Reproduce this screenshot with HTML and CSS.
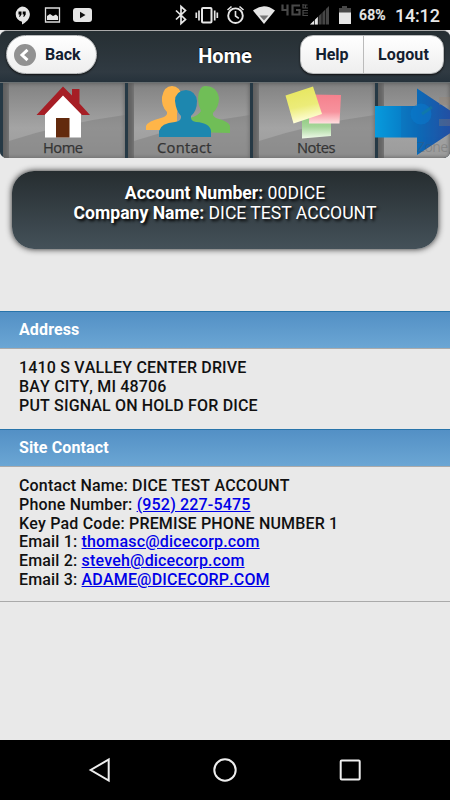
FILE: index.html
```html
<!DOCTYPE html>
<html lang="en">
<head>
<meta charset="utf-8">
<title>Home</title>
<link rel="stylesheet" href="styles.css">
</head>
<body>
<div class="status">
  <svg class="status-left" width="100" height="30" viewBox="0 0 100 30">
    <path d="M22 6.500a7.800 7.800 0 0 0 0 15.300V24.500c4-2 7.900-5.500 7.900-10.500A7.800 7.800 0 0 0 22 6.500z" fill="#e6e6e6"/>
    <path d="M18.500 11.500h3v3l-1.500 2.300h-1l.8-2.300h-1.300zM22.700 11.500h3v3l-1.500 2.300h-1l.8-2.300h-1.300z" fill="#000"/>
    <path d="M45.500 8h14v14h-14z" fill="none" stroke="#ddd" stroke-width="1.300"/>
    <path d="M47 20v-4l3-2 3 2 3-1.500 2 2V20z" fill="#e6e6e6"/>
    <rect x="73" y="8" width="19" height="14" rx="3" fill="#e6e6e6"/>
    <path d="M80 11.700v6.500l5.500-3.200z" fill="#111"/>
  </svg>
  <svg class="status-right" width="180" height="30" viewBox="172 0 180 30">
    <path d="M176 10.500l9.500 9-4.500 4V6.500l4.500 4-9.500 9" fill="none" stroke="#e6e6e6" stroke-width="1.700"/>
    <rect x="202" y="8" width="9.500" height="14.500" rx="1" fill="none" stroke="#e6e6e6" stroke-width="2"/>
    <path d="M199 10.500v10M196.300 12.500v5.500M214.700 10.500v10M217.300 12.500v5.500" stroke="#e6e6e6" stroke-width="1.700"/>
    <circle cx="235.500" cy="15.700" r="7.300" fill="none" stroke="#e6e6e6" stroke-width="1.900"/>
    <path d="M235.500 11v5l3.300 2.300M227.500 10l4-3.500M243.500 10l-4-3.500" fill="none" stroke="#e6e6e6" stroke-width="1.600"/>
    <path d="M253 10.500q11-8.500 22 0L264 24z" fill="#e6e6e6"/>
    <path d="M259.500 15.500h9l-4.500 5z" fill="#777"/>
    <path d="M282.500 4.500v5.500h6M287.500 4.500v11M300 5.500h-7.500v9h7v-4.500h-3.500" fill="none" stroke="#484848" stroke-width="2.200"/>
    <path d="M303 4v4h5M302.500 5h5M305.500 5v3M308 10.500h-5v5h5M303 13h5" fill="none" stroke="#484848" stroke-width="1.200"/>
    <path d="M310 24.500L329 6v18.500z" fill="#454545"/>
    <path d="M310 24.500l8-7.800v7.800z" fill="#e6e6e6"/>
    <path d="M314.500 19v6M318.300 16v9M322 11v14M325.500 8v17" stroke="#000" stroke-width=".7"/>
    <path d="M342 6h5v2h4v5h-12V8h3z" fill="#484848"/>
    <path d="M339 12.500h12V24h-12z" fill="#e6e6e6"/>
  </svg>
  <span class="battery">68%</span>
  <span class="clock">14:12</span>
</div>
<div class="top">
  <header class="header">
    <a class="btn back"><svg width="22" height="22" viewBox="0 0 22 22"><circle cx="11" cy="11" r="11" fill="#919191"/><path d="M13.500 5.800L8 11l5.500 5.200" fill="none" stroke="#fff" stroke-width="3"/></svg>Back</a>
    <h1>Home</h1>
    <div class="btn group"><a class="help">Help</a><a class="logout">Logout</a></div>
  </header>
  <nav class="tabs">
    <a class="tab"><svg width="122" height="75" viewBox="3 83 122 75">
      <path d="M9 141Q65 123 125 115v43H9z" class="shade"/>
      <path d="M45 110l18-18 18 18v27.500H45z" fill="#fff"/>
      <path d="M56 118h13.500v19.500H56z" fill="#632a0d"/>
      <path d="M36.500 115L63 86.500l9 9V89h7.500v14.500L90 115h-8L63 95.500 44.500 115z" fill="#a61e25"/>
    </svg><span class="home-label">Home</span></a>
    <a class="tab"><svg width="122" height="75" viewBox="128 83 122 75">
      <path d="M134 141Q190 123 250 115v43H134z" class="shade"/>
      <path d="M146 130v-4q2-5 15-8 7-2 6-6-6-6-5-15 2-11 10-11t10 11q0 9-5 15v18z" fill="#ffb548"/>
      <path d="M190 132v-14q8-2 11-7-3-6-3-13 1-12 7-12 12 0 14 12 0 9-6 15-1 4 6 6 10 3 11 7v7z" fill="#70be57"/>
      <path d="M159 137v-6q2-8 16-9 7-1 6-6-5-5-6-15 0-10 11-11 10 1 11 11 0 10-6 15-1 5 5 6 14 1 15 9v6z" fill="#1d87af"/>
    </svg><span class="contact-label">Contact</span></a>
    <a class="tab"><svg width="122" height="75" viewBox="253 83 122 75">
      <defs>
        <linearGradient id="green" x1="0" y1="0" x2="0" y2="1"><stop stop-color="#8bc77b"/><stop offset=".5" stop-color="#a6d69a"/><stop offset="1" stop-color="#effae9"/></linearGradient>
        <linearGradient id="pink" x1="0" y1="0" x2="0" y2="1"><stop stop-color="#f5818d"/><stop offset=".6" stop-color="#f7929d"/><stop offset="1" stop-color="#ffdfe0"/></linearGradient>
        <linearGradient id="yellow" x1="0" y1="0" x2=".2" y2="1"><stop stop-color="#e6e55a"/><stop offset=".6" stop-color="#ecec79"/><stop offset="1" stop-color="#fffed8"/></linearGradient>
      </defs>
      <path d="M259 141Q315 123 375 115v43H259z" class="shade"/>
      <path d="M302 115l29 3v18l-29 2.500z" fill="url(#green)"/>
      <path d="M310 94.500l31 .5-1.500 28.500H309z" fill="url(#pink)"/>
      <path d="M285.500 95.500L313 86.500l9 27.500-28.500 9.500z" fill="url(#yellow)"/>
    </svg><span class="notes-label">Notes</span></a>
    <a class="tab last"></a>
    <svg class="arrow" width="75" height="75" viewBox="375 83 75 75">
      <defs><linearGradient id="blue" gradientUnits="userSpaceOnUse" x1="375" y1="0" x2="452" y2="0"><stop stop-color="#079bdd"/><stop offset=".55" stop-color="#076fbd"/><stop offset="1" stop-color="#244da4"/></linearGradient></defs>
      <path d="M375 106h42V88.500l50 33.500-50 33v-17.500h-42z" fill="url(#blue)"/>
      <path d="M401 106h16V88.500l50 33.500-50 33v-17.500h-16z" fill="#23559c" opacity=".17"/>
      <circle cx="421" cy="114" r="10.500" fill="#087bd0" opacity=".5"/>
      <path d="M422 114l10-7" stroke="#148394" stroke-width="3" opacity=".45"/>
      <path d="M439 97h11v8h-11zM439 119h11v7h-11z" fill="#99806a" opacity=".3"/>
    </svg>
    <span class="zone-label">Zone</span>
  </nav>
</div>
<main>
  <section class="account"><div><b>Account Number:</b> 00DICE</div><div><b>Company Name:</b> DICE TEST ACCOUNT</div></section>
  <h2>Address</h2>
  <section class="details address">
    <div>1410 S VALLEY CENTER DRIVE</div>
    <div>BAY CITY, MI 48706</div>
    <div>PUT SIGNAL ON HOLD FOR DICE</div>
  </section>
  <h2>Site Contact</h2>
  <section class="details contact">
    <div>Contact Name: DICE TEST ACCOUNT</div>
    <div>Phone Number: <a href="#">(952) 227-5475</a></div>
    <div>Key Pad Code: PREMISE PHONE NUMBER 1</div>
    <div>Email 1: <a href="#">thomasc@dicecorp.com</a></div>
    <div>Email 2: <a href="#">steveh@dicecorp.com</a></div>
    <div>Email 3: <a href="#">ADAME@DICECORP.COM</a></div>
  </section>
</main>
<footer class="softkeys">
  <svg width="24" height="26" viewBox="0 0 24 26"><path d="M21.700 2.500v21L3.700 13z"/></svg>
  <svg width="26" height="26" viewBox="0 0 26 26"><circle cx="13" cy="13" r="10.700"/></svg>
  <svg width="24" height="26" viewBox="0 0 24 26"><rect x="1.700" y="3.500" width="19" height="19" rx="1"/></svg>
</footer>
</body>
</html>
```
FILE: styles.css
```css
* { box-sizing: border-box; }
body {
  margin: 0;
  width: 450px;
  height: 800px;
  display: flex;
  flex-direction: column;
  overflow: hidden;
  background: #e9e9e9;
  color: #111;
  font-family: Roboto, sans-serif;
}
.status {
  height: 30px;
  display: flex;
  align-items: center;
  background: #000;
  color: #e8e8e8;
  flex: none;
}
.status-right { margin-left: 72px; }
.battery { width: 36px; margin-left: 7px; font-size: 14px; font-weight: 500; letter-spacing: .2px; -webkit-text-stroke: .25px #e8e8e8; }
.clock { font-size: 18px; font-weight: 500; letter-spacing: -.2px; padding-top: 1px; }
.top {
  height: 128px;
  flex: none;
  border-top: 1px solid #aaa;
  border-radius: 7px;
  overflow: hidden;
  background: #263038;
}
.header {
  height: 51px;
  display: grid;
  grid-template-columns: 150px 150px 150px;
  background: linear-gradient(#262f33, #303a42 80%, #26323b);
}
.header h1 {
  margin: 0;
  padding-top: 14px;
  text-align: center;
  color: #fff;
  font-size: 20px;
  line-height: 23px;
  font-weight: 700;
  text-shadow: 0 -1px 1px #000;
}
.btn {
  height: 39px;
  margin-top: 4px;
  display: flex;
  align-items: center;
  border: 1px solid #b9bbbc;
  background: linear-gradient(#fff, #eee);
  box-shadow: 0 1px 2px #111;
  color: #142030;
  font-size: 16px;
  font-weight: 700;
}
.back { width: 91px; margin-left: 6px; border-radius: 20px; padding-left: 7px; gap: 9px; }
.group { width: 144px; border-radius: 13px; align-items: stretch; }
.group a { display: flex; align-items: center; justify-content: center; }
.help { width: 63px; border-right: 1px solid #bbb; }
.logout { flex: 1; letter-spacing: .1px; }
.tabs {
  height: 76px;
  display: flex;
  gap: 3px;
  padding-left: 3px;
  position: relative;
  background: #263945;
  border-top: 1px solid #6a7072;
  font-family: "Open Sans", sans-serif;
  font-size: 14.7px;
  line-height: 18px;
}
.tab {
  width: 122px;
  height: 75px;
  flex: none;
  position: relative;
  background: linear-gradient(90deg, #686868 0 3px, #747474 6px, transparent 6px), linear-gradient(#828282, #a4a4a4 60%, #9b9b9b);
  box-shadow: inset 0 0 4px #555;
  color: #343434;
}
.tab svg { display: block; }
.tab span { position: absolute; top: 55px; -webkit-text-stroke: .25px #343434; }
.shade { fill: #777; opacity: .42; }
.home-label { left: 40px; letter-spacing: -.5px; }
.contact-label { left: 29px; letter-spacing: .3px; }
.notes-label { left: 44px; letter-spacing: -.5px; }
.zone-label { position: absolute; left: 417px; top: 55px; color: #555; opacity: .3; font-size: 14px; letter-spacing: -.6px; }
.last { width: 72px; overflow: hidden; }
.arrow { position: absolute; right: 0; top: 0; }
main { flex: 1; min-height: 0; }
.account {
  height: 78px;
  margin: 13px 12px 62px;
  padding-top: 12px;
  border-radius: 22px;
  background: linear-gradient(#262d30, #445159);
  box-shadow: 0 0 6px #222;
  text-align: center;
  color: #fff;
  font-size: 17.6px;
  line-height: 20px;
  text-shadow: 2px 2px 3px #000;
}
h2 {
  height: 37px;
  margin: 0;
  padding: 0 19px;
  border-top: 1px solid #2874aa;
  background: linear-gradient(#5390c5, #6ba6d4);
  box-shadow: 0 1px #aaa;
  color: #fff;
  font-size: 16px;
  letter-spacing: .12px;
  line-height: 35px;
  font-weight: 700;
}
.details { padding: 11px 19px 0; font-size: 16px; line-height: 18.8px; font-weight: 500; letter-spacing: .17px; font-kerning: none; }
.address { height: 81px; }
.contact { height: 136px; border-bottom: 1px solid #aaa; }
.details a { color: #0000e8; }
.softkeys {
  height: 60px;
  flex: none;
  display: flex;
  justify-content: center;
  align-items: center;
  gap: 101px;
  background: #000;
}
.softkeys svg { fill: none; stroke: #eee; stroke-width: 2; }
```
